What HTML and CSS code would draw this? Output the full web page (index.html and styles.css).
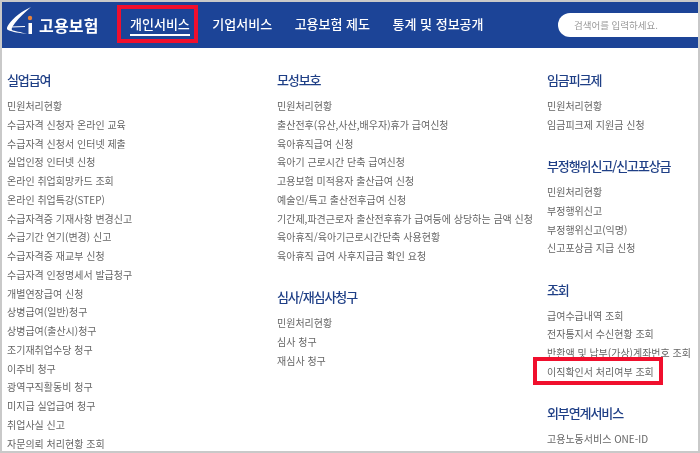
FILE: index.html
```html
<!DOCTYPE html>
<html lang="ko">
<head>
    <meta charset="UTF-8">
    <title>고용보험 개인서비스</title>
    <link rel="stylesheet" href="styles.css">
</head>
<body>
<div class="frame">

    <header class="top">
        <a class="logo" href="#">
            <svg class="logo-mark" width="27" height="38" viewBox="7 6 27 38">
                <path d="M31 7 C22 11 13 18 9 24 C7 27 6 29 8 30 C12 32 20 33 27 34 C21 32 14 31 12 30 C11 28 13 26 15 23 C19 18 25 12 31 7 Z" fill="#fff"/>
                <path d="M11 26.5 L25 26 L25 27 L11 27.5 Z" fill="#fff"/>
                <circle cx="30" cy="18" r="2.2" fill="#e8833a"/>
                <rect x="28.5" y="23" width="3.5" height="11" fill="#fff"/>
            </svg>
            <span class="logo-text">고용보험</span>
        </a>
        <nav class="gnb">
            <a class="gnb-item on mark" href="#">개인서비스</a>
            <a class="gnb-item" href="#">기업서비스</a>
            <a class="gnb-item" href="#">고용보험 제도</a>
            <a class="gnb-item" href="#">통계 및 정보공개</a>
        </nav>
        <input class="search" type="text" placeholder="검색어를 입력하세요.">
    </header>

    <div class="menu">
        <div class="col">
            <div class="group">
                <h3>실업급여</h3>
                <ul>
                    <li>민원처리현황</li>
                    <li>수급자격 신청자 온라인 교육</li>
                    <li>수급자격 신청서 인터넷 제출</li>
                    <li>실업인정 인터넷 신청</li>
                    <li>온라인 취업희망카드 조회</li>
                    <li>온라인 취업특강(STEP)</li>
                    <li>수급자격증 기재사항 변경신고</li>
                    <li>수급기간 연기(변경) 신고</li>
                    <li>수급자격증 재교부 신청</li>
                    <li>수급자격 인정명세서 발급청구</li>
                    <li>개별연장급여 신청</li>
                    <li>상병급여(일반)청구</li>
                    <li>상병급여(출산시)청구</li>
                    <li>조기재취업수당 청구</li>
                    <li>이주비 청구</li>
                    <li>광역구직활동비 청구</li>
                    <li>미지급 실업급여 청구</li>
                    <li>취업사실 신고</li>
                    <li>자문의뢰 처리현황 조회</li>
                </ul>
            </div>
        </div>
        <div class="col">
            <div class="group">
                <h3>모성보호</h3>
                <ul>
                    <li>민원처리현황</li>
                    <li>출산전후(유산,사산,배우자)휴가 급여신청</li>
                    <li>육아휴직급여 신청</li>
                    <li>육아기 근로시간 단축 급여신청</li>
                    <li>고용보험 미적용자 출산급여 신청</li>
                    <li>예술인/특고 출산전후급여 신청</li>
                    <li>기간제,파견근로자 출산전후휴가 급여등에 상당하는 금액 신청</li>
                    <li>육아휴직/육아기근로시간단축 사용현황</li>
                    <li>육아휴직 급여 사후지급금 확인 요청</li>
                </ul>
            </div>
            <div class="group">
                <h3>심사/재심사청구</h3>
                <ul>
                    <li>민원처리현황</li>
                    <li>심사 청구</li>
                    <li>재심사 청구</li>
                </ul>
            </div>
        </div>
        <div class="col">
            <div class="group">
                <h3>임금피크제</h3>
                <ul>
                    <li>민원처리현황</li>
                    <li>임금피크제 지원금 신청</li>
                </ul>
            </div>
            <div class="group">
                <h3>부정행위신고/신고포상금</h3>
                <ul>
                    <li>민원처리현황</li>
                    <li>부정행위신고</li>
                    <li>부정행위신고(익명)</li>
                    <li>신고포상금 지급 신청</li>
                </ul>
            </div>
            <div class="group">
                <h3>조회</h3>
                <ul>
                    <li>급여수급내역 조회</li>
                    <li>전자통지서 수신현황 조회</li>
                    <li>반환액 및 납부(가상)계좌번호 조회</li>
                    <li><span class="mark">이직확인서 처리여부 조회</span></li>
                </ul>
            </div>
            <div class="group">
                <h3>외부연계서비스</h3>
                <ul>
                    <li>고용노동서비스 ONE-ID</li>
                </ul>
            </div>
        </div>
    </div>

</div>
</body>
</html>
```
FILE: styles.css
```css
* {
    box-sizing: border-box;
}
html, body {
    margin: 0;
    padding: 0;
    background-color: #fff;
}
body {
    font-family: "Noto Sans CJK KR", "Noto Sans", sans-serif;
}
.frame {
    width: 700px;
    height: 453px;
    overflow: hidden;
    border: 2px solid #c9c9c9;
    background-color: #fff;
    filter: blur(0.3px);
}
.top {
    display: flex;
    align-items: center;
    height: 46px;
    background-color: #1c4497;
}
.logo {
    display: flex;
    align-items: center;
    width: 128px;
    padding-left: 5px;
    color: #fff;
    text-decoration: none;
}
.logo-mark {
    flex: none;
    margin-right: 5px;
}
.logo-text {
    font-size: 16px;
    font-weight: 700;
    letter-spacing: 0.2px;
}
.gnb {
    display: flex;
    gap: 22.5px;
    align-items: center;
}
.gnb-item {
    color: #fff;
    font-size: 13px;
    font-weight: 500;
    text-decoration: none;
    line-height: 20px;
    border-bottom: 2px solid transparent;
}
.gnb-item.on {
    border-bottom-color: #fff;
}
.search {
    width: 140px;
    height: 24px;
    margin-left: auto;
    padding: 0 0 0 16px;
    border: none;
    border-radius: 12px 0 0 12px;
    background-color: #fff;
    font-family: inherit;
    font-size: 9.5px;
}
.search::placeholder {
    color: #999;
}
.menu {
    display: grid;
    grid-template-columns: 270px 270px 1fr;
    padding: 22px 0 0 5px;
}
.group {
    margin-bottom: 21.6px;
}
h3 {
    margin: 0 0 7px;
    color: #1f3f86;
    font-size: 13px;
    font-weight: 500;
    line-height: 20px;
    letter-spacing: -1.1px;
}
ul {
    margin: 0;
    padding: 0;
    list-style: none;
}
li {
    color: #666;
    font-size: 10px;
    line-height: 18.75px;
    white-space: nowrap;
}
.mark {
    position: relative;
}
.mark::after {
    content: "";
    position: absolute;
    border: 4px solid #f00f2d;
}
.gnb-item.mark::after {
    top: -9px;
    left: -13px;
    right: -8px;
    bottom: -9px;
}
li .mark::after {
    top: -7px;
    left: -14px;
    right: -9px;
    bottom: -6px;
}
```
